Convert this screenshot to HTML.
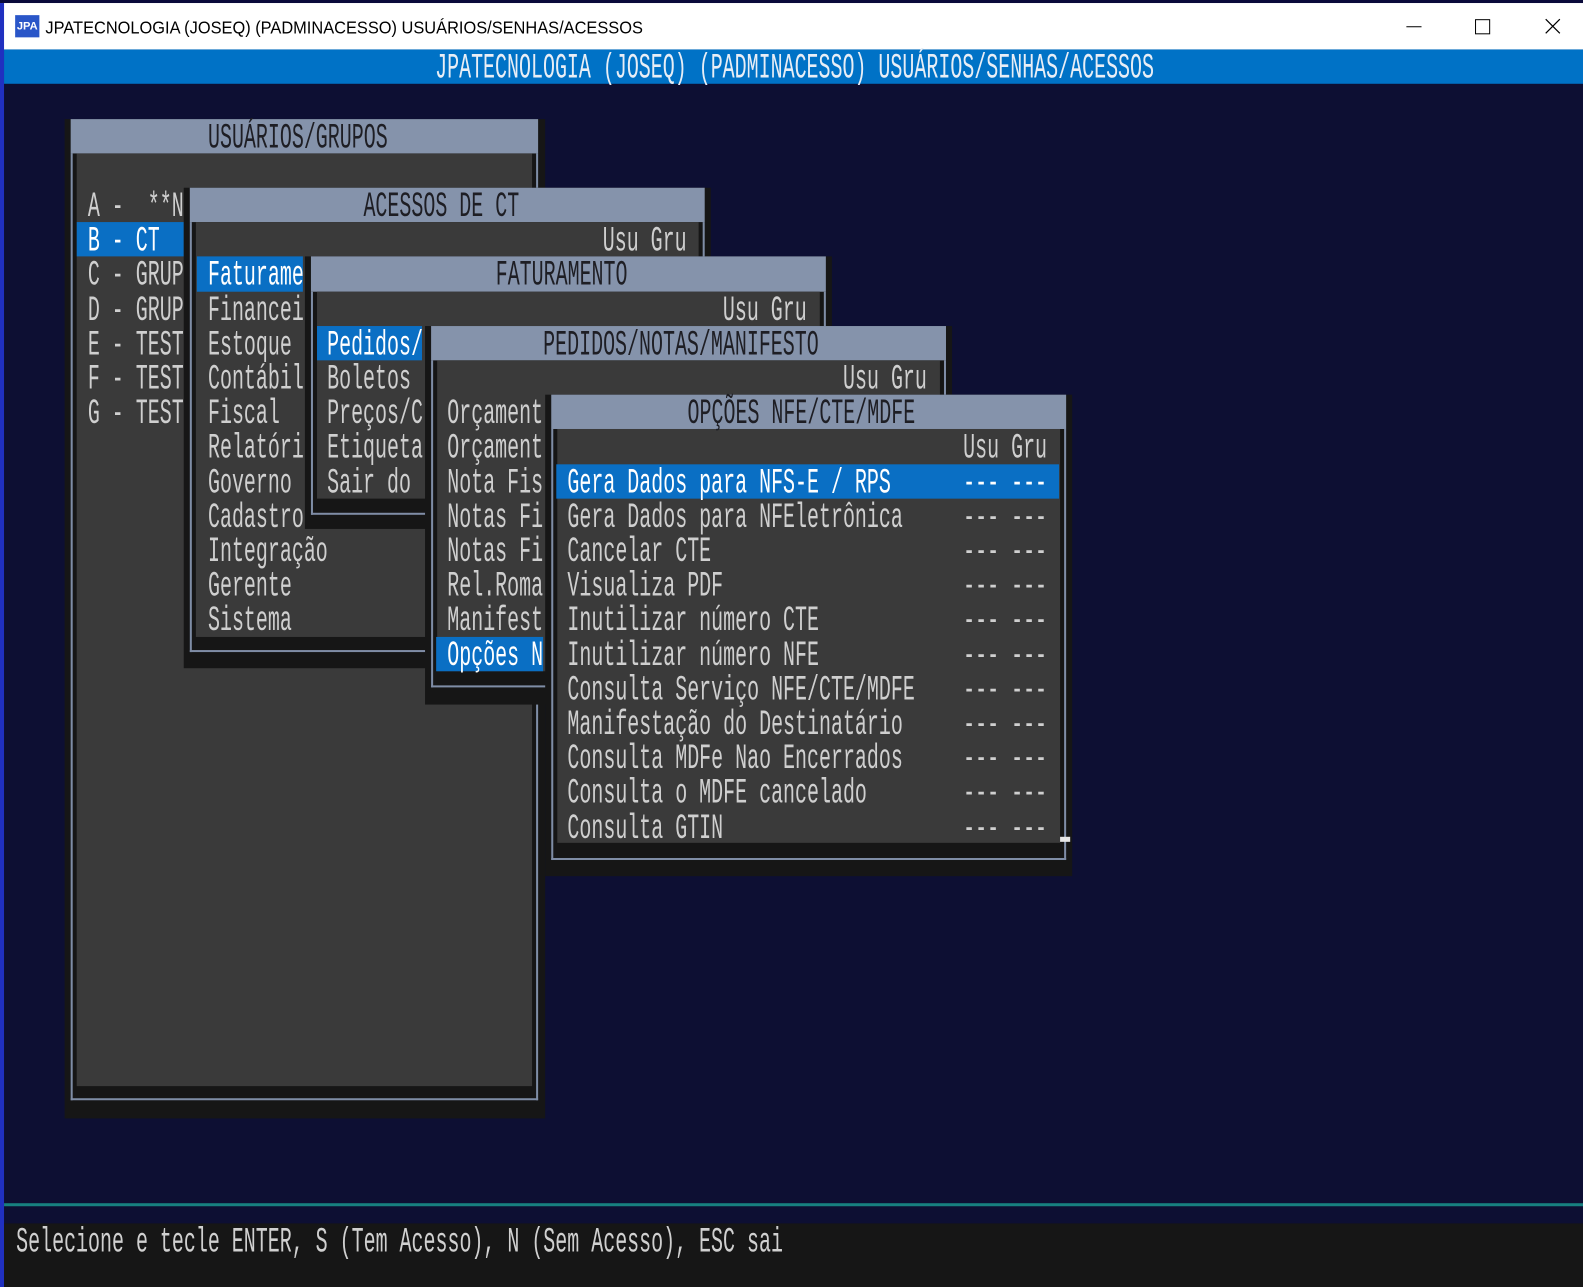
<!DOCTYPE html>
<html><head><meta charset="utf-8"><style>
html,body{margin:0;padding:0;width:1583px;height:1287px;overflow:hidden;background:#0d0f33;}
#s{position:absolute;left:0;top:0;width:1568px;height:1275px;transform:scale(1.0096,1.0094);transform-origin:0 0;background:#0d0f33;}
.a{position:absolute;}
.t{position:absolute;top:calc(188px + var(--r)*34.2px);left:calc(87px + var(--c)*11.87px);font-family:"Liberation Mono",monospace;font-size:35px;line-height:34.2px;height:34.2px;white-space:pre;color:#cfcfcf;transform:scaleX(0.565);transform-origin:0 0;}
.d{color:#1e1e24;}
.w{color:#ffffff;}
.hl{position:absolute;background:#0a6fc4;height:34.2px;top:calc(186px + var(--r)*34.2px);}
</style></head><body><div id="s">
<div class="a" style="left:0;top:0;width:1568px;height:3px;background:#0a0a3a"></div>
<div class="a" style="left:0;top:3px;width:1568px;height:46px;background:#fff"></div>
<div class="a" style="left:0;top:3px;width:4px;height:1272px;background:#2030c0"></div>
<div class="a" style="left:15px;top:15px;width:24px;height:22px;background:#2a56c8;color:#fff;font:bold 11px 'Liberation Sans',sans-serif;line-height:22px;text-align:center;">JPA</div>
<div class="a" style="left:45px;top:16px;font:17px 'Liberation Sans',sans-serif;color:#000;line-height:24px;white-space:pre;transform:scaleX(0.955);transform-origin:0 0">JPATECNOLOGIA (JOSEQ) (PADMINACESSO) USUÁRIOS/SENHAS/ACESSOS</div>
<div class="a" style="left:1393px;top:26px;width:15px;height:1px;background:#000"></div>
<div class="a" style="left:1461px;top:19px;width:13px;height:13px;border:1px solid #000"></div>
<svg class="a" style="left:1530px;top:18px" width="16" height="16"><path d="M1 1L15 15M15 1L1 15" stroke="#000" stroke-width="1.2"/></svg>
<div class="a" style="left:4px;top:49px;width:1564px;height:34px;background:#0072c6"></div>
<div class="t w" style="--r:-4;--c:29;color:#e8eef6">JPATECNOLOGIA (JOSEQ) (PADMINACESSO) USUÁRIOS/SENHAS/ACESSOS</div>

<div class="a" style="left:64px;top:117.8px;width:476px;height:990px;background:#161616"></div>
<div class="a" style="left:70px;top:117.8px;width:463px;height:34.2px;background:#8593ab"></div>
<div class="a" style="left:70px;top:152px;width:459px;height:936px;border:2px solid #7f8da6;border-top:none"></div>
<div class="a" style="left:76px;top:152px;width:451px;height:924px;background:#3a3a3a"></div>
<div class="t d" style="--r:-2;--c:10">USUÁRIOS/GRUPOS</div>
<div class="hl" style="--r:1;left:76px;width:106px"></div>
<div class="t" style="--r:0;--c:0">A -  **N</div>
<div class="t w" style="--r:1;--c:0">B - CT</div>
<div class="t" style="--r:2;--c:0">C - GRUP</div>
<div class="t" style="--r:3;--c:0">D - GRUP</div>
<div class="t" style="--r:4;--c:0">E - TEST</div>
<div class="t" style="--r:5;--c:0">F - TEST</div>
<div class="t" style="--r:6;--c:0">G - TEST</div>

<div class="a" style="left:182px;top:186px;width:522px;height:476px;background:#161616"></div>
<div class="a" style="left:188px;top:186px;width:510px;height:34.2px;background:#8593ab"></div>
<div class="a" style="left:188px;top:220.2px;width:506px;height:424px;border:2px solid #7f8da6;border-top:none"></div>
<div class="a" style="left:194px;top:220.2px;width:498px;height:410.4px;background:#3a3a3a"></div>
<div class="t d" style="--r:0;--c:23">ACESSOS DE CT</div>
<div class="t" style="--r:1;--c:43">Usu Gru</div>
<div class="hl" style="--r:2;left:195px;width:105px"></div>
<div class="t w" style="--r:2;--c:10">Faturame</div>
<div class="t" style="--r:3;--c:10">Financei</div>
<div class="t" style="--r:4;--c:10">Estoque</div>
<div class="t" style="--r:5;--c:10">Contábil</div>
<div class="t" style="--r:6;--c:10">Fiscal</div>
<div class="t" style="--r:7;--c:10">Relatóri</div>
<div class="t" style="--r:8;--c:10">Governo</div>
<div class="t" style="--r:9;--c:10">Cadastro</div>
<div class="t" style="--r:10;--c:10">Integração</div>
<div class="t" style="--r:11;--c:10">Gerente</div>
<div class="t" style="--r:12;--c:10">Sistema</div>

<div class="a" style="left:302px;top:254.4px;width:522px;height:270px;background:#161616"></div>
<div class="a" style="left:308px;top:254.4px;width:510px;height:34.2px;background:#8593ab"></div>
<div class="a" style="left:308px;top:288.6px;width:506px;height:219px;border:2px solid #7f8da6;border-top:none"></div>
<div class="a" style="left:314px;top:288.6px;width:498px;height:205.4px;background:#3a3a3a"></div>
<div class="t d" style="--r:2;--c:34">FATURAMENTO</div>
<div class="t" style="--r:3;--c:53">Usu Gru</div>
<div class="hl" style="--r:4;left:314px;width:104px"></div>
<div class="t w" style="--r:4;--c:20">Pedidos/</div>
<div class="t" style="--r:5;--c:20">Boletos</div>
<div class="t" style="--r:6;--c:20">Preços/C</div>
<div class="t" style="--r:7;--c:20">Etiqueta</div>
<div class="t" style="--r:8;--c:20">Sair do</div>

<div class="a" style="left:421px;top:322.8px;width:522px;height:375px;background:#161616"></div>
<div class="a" style="left:427px;top:322.8px;width:510px;height:34.2px;background:#8593ab"></div>
<div class="a" style="left:427px;top:357px;width:506px;height:322px;border:2px solid #7f8da6;border-top:none"></div>
<div class="a" style="left:433px;top:357px;width:498px;height:308px;background:#3a3a3a"></div>
<div class="t d" style="--r:4;--c:38">PEDIDOS/NOTAS/MANIFESTO</div>
<div class="t" style="--r:5;--c:63">Usu Gru</div>
<div class="t" style="--r:6;--c:30">Orçament</div>
<div class="t" style="--r:7;--c:30">Orçament</div>
<div class="t" style="--r:8;--c:30">Nota Fis</div>
<div class="t" style="--r:9;--c:30">Notas Fi</div>
<div class="t" style="--r:10;--c:30">Notas Fi</div>
<div class="t" style="--r:11;--c:30">Rel.Roma</div>
<div class="t" style="--r:12;--c:30">Manifest</div>
<div class="hl" style="--r:13;left:432px;width:106px"></div>
<div class="t w" style="--r:13;--c:30">Opções N</div>

<div class="a" style="left:540px;top:391.2px;width:522px;height:477px;background:#161616"></div>
<div class="a" style="left:546px;top:391.2px;width:510px;height:34.2px;background:#8593ab"></div>
<div class="a" style="left:546px;top:425.4px;width:506px;height:425px;border:2px solid #7f8da6;border-top:none"></div>
<div class="a" style="left:552px;top:425.4px;width:498px;height:410px;background:#3a3a3a"></div>
<div class="a" style="left:1050px;top:829px;width:10px;height:5px;background:#e8e8e8"></div>
<div class="t d" style="--r:6;--c:50">OPÇÕES NFE/CTE/MDFE</div>
<div class="t" style="--r:7;--c:73">Usu Gru</div>
<div class="hl" style="--r:8;left:551px;width:498px"></div>
<div class="t w" style="--r:8;--c:40">Gera Dados para NFS-E / RPS</div><div class="t w" style="--r:8;--c:73">--- ---</div>
<div class="t" style="--r:9;--c:40">Gera Dados para NFEletrônica</div><div class="t" style="--r:9;--c:73">--- ---</div>
<div class="t" style="--r:10;--c:40">Cancelar CTE</div><div class="t" style="--r:10;--c:73">--- ---</div>
<div class="t" style="--r:11;--c:40">Visualiza PDF</div><div class="t" style="--r:11;--c:73">--- ---</div>
<div class="t" style="--r:12;--c:40">Inutilizar número CTE</div><div class="t" style="--r:12;--c:73">--- ---</div>
<div class="t" style="--r:13;--c:40">Inutilizar número NFE</div><div class="t" style="--r:13;--c:73">--- ---</div>
<div class="t" style="--r:14;--c:40">Consulta Serviço NFE/CTE/MDFE</div><div class="t" style="--r:14;--c:73">--- ---</div>
<div class="t" style="--r:15;--c:40">Manifestação do Destinatário</div><div class="t" style="--r:15;--c:73">--- ---</div>
<div class="t" style="--r:16;--c:40">Consulta MDFe Nao Encerrados</div><div class="t" style="--r:16;--c:73">--- ---</div>
<div class="t" style="--r:17;--c:40">Consulta o MDFE cancelado</div><div class="t" style="--r:17;--c:73">--- ---</div>
<div class="t" style="--r:18;--c:40">Consulta GTIN</div><div class="t" style="--r:18;--c:73">--- ---</div>

<div class="a" style="left:4px;top:1192px;width:1564px;height:3px;background:#178080"></div>
<div class="a" style="left:4px;top:1212px;width:1564px;height:63px;background:#161616"></div>
<div class="t" style="--r:30;--c:-6;color:#d0d0d0">Selecione e tecle ENTER, S (Tem Acesso), N (Sem Acesso), ESC sai</div>
</div></body></html>
